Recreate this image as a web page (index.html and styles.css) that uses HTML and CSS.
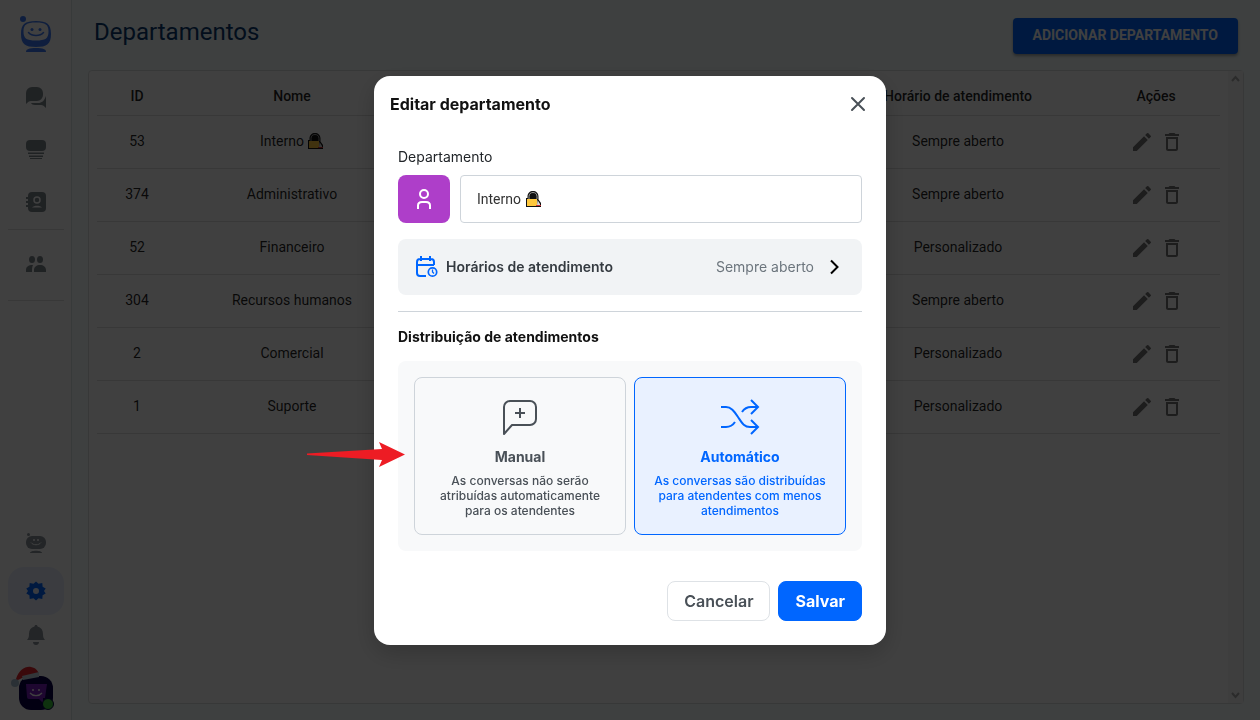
FILE: index.html
```html
<!DOCTYPE html>
<html lang="pt-BR">
<head>
<meta charset="utf-8">
<title>Departamentos</title>
<link rel="stylesheet" href="styles.css">
</head>
<body>
<svg width="0" height="0" class="sprite" aria-hidden="true">
  <symbol id="pencil" viewBox="0 0 24 24"><path d="M3 17.25V21h3.75L17.81 9.94l-3.75-3.75L3 17.25zM20.71 7.04a1 1 0 0 0 0-1.41l-2.34-2.34a1 1 0 0 0-1.41 0l-1.83 1.83 3.75 3.75 1.83-1.83z"/></symbol>
  <symbol id="trash" viewBox="0 0 24 24"><path d="M6 19c0 1.100.9 2 2 2h8c1.100 0 2-.9 2-2V7H6v12zM8 9h8v10H8V9zm7.500-5-1-1h-5l-1 1H5v2h14V4z"/></symbol>
  <symbol id="lock" viewBox="0 0 16 16">
    <path d="M0 16V7h1.500V5.500C1.500 2 4 0 7 0s5.500 2 5.500 5.500V8.500L15 12v4z" fill="#111"/>
    <path d="M3 8V5.500C3 3 4.600 1.500 7 1.500S11 3 11 5.500V8" fill="none" stroke="#9a9a9a" stroke-width="1"/>
    <rect x="1" y="8" width="10" height="7" fill="#ffc83d"/>
    <path d="M11.500 9l2.500 4v1h-3z" fill="#d8d8d8"/><path d="M10 14.500h5" stroke="#d13438"/>
  </symbol>
</svg>
<div class="app">
  <nav class="sidebar">
    <div class="side-group">
      <svg class="logo" width="36" height="40" viewBox="0 0 36 40"><g fill="#3d7af5"><circle cx="5" cy="3" r="3"/><path d="M18 5C7 5 3 8 3 18S7 31 18 31s15-3 15-13S29 5 18 5zM18 6.500c9.500 0 12.500 2 12.500 9S27.500 24.500 18 24.500 5.500 22.500 5.500 15.500 8.500 6.500 18 6.500z" fill-rule="evenodd"/><path d="M8 36c0-3 3-4 10-4s10 1 10 4z"/><circle cx="14" cy="13.500" r="1.500"/><circle cx="22" cy="13.500" r="1.500"/></g><path d="M10.500 16.500c3.500 4 11.500 4 15 0" fill="none" stroke="#3d7af5" stroke-width="1.500" stroke-linecap="round"/></svg>
      <a class="side-item" href="#" aria-label="Conversas"><svg width="20" height="22" viewBox="0 0 20 22"><path d="M0 17V6a6 6 0 0 1 6-6h5a6 6 0 0 1 6 6v2a6 6 0 0 1-6 6H5c-2 0-3 1-5 3z"/><path d="M20 9v12c-2-2-3-3-5-3H9c-2 0-3.500-.7-4-2h7c4 0 6-2 8-7z"/></svg></a>
      <a class="side-item" href="#" aria-label="Filas"><svg width="20" height="20" viewBox="0 0 20 20"><rect y="0" width="20" height="11" rx="4"/><path d="M2 12.500h16V14H2zM3 15.500h14V17H3zM4 18h12v1H4z"/></svg></a>
      <a class="side-item" href="#" aria-label="Contatos"><svg width="20" height="20" viewBox="0 0 20 20"><rect x="2" width="18" height="20" rx="4"/><path d="M0 5h3v2H0zM0 9h3v2H0zM0 13h3v2H0z"/><circle cx="11" cy="8" r="3" fill="none" stroke="#fff" stroke-width="1.500"/><path d="M6 15.500c2-2.500 8-2.500 10 0z" fill="#fff"/></svg></a>
      <hr class="side-line">
      <a class="side-item team" href="#" aria-label="Equipe"><svg width="20" height="16" viewBox="0 0 20 16"><ellipse cx="6" cy="3.500" rx="3" ry="3.500"/><ellipse cx="14" cy="3.500" rx="3" ry="3.500"/><path d="M0 16v-2c0-3 2-5 7-5-1 2-1 4-1 7zM8 16v-2c0-3 2.500-5 6-5s6 2 6 5v2z"/></svg></a>
      <hr class="side-line">
    </div>
    <div class="side-group">
      <a class="side-item bot" href="#" aria-label="Robô"><svg width="20" height="21" viewBox="0 0 20 21"><circle cx="2.500" cy="1.500" r="1.500"/><rect y="3" width="20" height="13" rx="6"/><path d="M4 20c0-3 12-3 12 0z"/><g fill="#fff"><circle cx="8" cy="7" r="1"/><circle cx="12" cy="7" r="1"/></g><path d="M5 9.500c2 3 8 3 10 0" fill="none" stroke="#fff"/></svg></a>
      <a class="side-item active" href="#" aria-label="Configurações"><svg width="20" height="20" viewBox="0 0 20 20"><path fill-rule="evenodd" d="M10 0.500l2.500 2.200 3.800-.8.300 3.900 3.100 1.700-1.700 2.500 1.700 2.500-3.100 1.700-.3 3.900-3.800-.8L10 19.500l-2.500-2.200-3.800.8-.3-3.900L.3 12.500 2 10 .3 7.500l3.100-1.700.3-3.900 3.800.8zM10 7a3 3 0 1 0 0 6 3 3 0 0 0 0-6z"/></svg></a>
      <a class="side-item bell" href="#" aria-label="Notificações"><svg width="18" height="20" viewBox="0 0 18 20"><path d="M9 0c1 0 1.500.6 1.500 1.600C14 2.500 16 5 16 9c0 3 .5 4 2 6H0c1.500-2 2-3 2-6 0-4 2-6.500 5.500-7.400C7.500.6 8 0 9 0zM6 17h6c0 1.700-1.300 3-3 3s-3-1.300-3-3z"/></svg></a>
      <svg class="avatar" width="44" height="44" viewBox="0 0 44 44"><rect x="9" y="10" width="34" height="34" rx="12" fill="#0a0048"/><path d="M16 18h21l-2 14h-2v5l-4-4H19q-2 0-2-2z" fill="#7a1fc0"/><circle cx="23" cy="24" r="1" fill="#fff"/><circle cx="29" cy="24" r="1" fill="#fff"/><path d="M20 27c3 3.500 9 3.500 12 0" fill="none" stroke="#fff" stroke-width="1.200"/><path d="M6 13C9 4 15 0 21 1c5 1 7 4 8 7l-17 4-6 3z" fill="#e8262c"/><path d="M12 10l17-4v5l-16 3z" fill="#c5d5e2"/><circle cx="5" cy="17" r="4" fill="#a9c0d2"/><circle cx="38" cy="38" r="5.500" fill="#3cc83c" stroke="#0a0048"/></svg>
    </div>
  </nav>
  <main class="main">
    <header class="page-head">
      <h1 class="page-title">Departamentos</h1>
      <button class="add-button" type="button">ADICIONAR DEPARTAMENTO</button>
    </header>
    <section class="card">
      <div class="table-wrap">
        <table class="table">
          <colgroup><col class="col-id"><col class="col-name"><col><col class="col-hours"><col class="col-actions"></colgroup>
          <thead><tr><th>ID</th><th>Nome</th><td></td><th>Horário de atendimento</th><th>Ações</th></tr></thead>
          <tbody id="rows"></tbody>
        </table>
      </div>
      <div class="scrollbar" aria-hidden="true">
        <svg width="9" height="8" viewBox="0 0 9 8"><path d="M1 6l3.500-4L8 6" fill="none" stroke="currentColor" stroke-width="2"/></svg>
        <svg width="9" height="8" viewBox="0 0 9 8"><path d="M1 2l3.500 4L8 2" fill="none" stroke="currentColor" stroke-width="2"/></svg>
      </div>
    </section>
  </main>
</div>
<div class="overlay">
  <form class="modal" role="dialog" aria-labelledby="modal-title">
    <header class="modal-head">
      <h2 class="modal-title" id="modal-title">Editar departamento</h2>
      <button class="close" type="button" aria-label="Fechar"><svg width="16" height="16" viewBox="0 0 16 16"><path d="M2 2l12 12m0-12L2 14" stroke="#495057" stroke-width="2" stroke-linecap="round"/></svg></button>
    </header>
    <div class="modal-body">
      <label class="label" for="department">Departamento</label>
      <div class="field-row">
        <button class="icon-button" type="button" aria-label="Ícone"><svg width="14" height="20" viewBox="0 0 14 20" fill="none" stroke="#fff" stroke-width="2"><circle cx="7" cy="5" r="4"/><path d="M1 20v-3.500C1 14 2.500 13 5 13h4c2.500 0 4 1 4 3.500V20"/></svg></button>
        <div class="input-wrap">
          <input class="input" id="department" type="text" value="Interno">
          <svg class="input-emoji" width="16" height="16"><use href="#lock"/></svg>
        </div>
      </div>
      <button class="hours" type="button">
        <svg width="22" height="22" viewBox="0 0 22 22" fill="none" stroke="#0066ff" stroke-width="2"><path d="M10 20H4a3 3 0 0 1-3-3V6a3 3 0 0 1 3-3h11a3 3 0 0 1 3 3v3M1 9h17M5 0v5M14 0v5"/><circle cx="16.500" cy="16" r="4.200" stroke-width="1.700"/><path d="M16.500 13.500V16l1.500 1.500" stroke-width="1.300"/></svg>
        <span class="hours-name">Horários de atendimento</span>
        <span class="hours-value">Sempre aberto</span>
        <svg width="24" height="16" viewBox="0 0 24 16" fill="none" stroke="#000" stroke-width="2"><path d="M9 1.500l6.500 6.500L9 14.500"/></svg>
      </button>
      <fieldset class="distribution">
        <legend class="section-title">Distribuição de atendimentos</legend>
        <div class="options">
          <label class="option">
            <input class="radio" type="radio" name="mode">
            <svg width="40" height="40" viewBox="0 0 40 40" fill="none" stroke="#495057" stroke-width="2"><path d="M4 36V9a6 6 0 0 1 6-6h20a6 6 0 0 1 6 6v12a6 6 0 0 1-6 6H12z" stroke-linejoin="round"/><path d="M20 10v10M15 15h10"/></svg>
            <strong class="option-name">Manual</strong>
            <span class="option-text">As conversas não serão atribuídas automaticamente para os atendentes</span>
          </label>
          <label class="option selected">
            <input class="radio" type="radio" name="mode" checked>
            <svg width="40" height="40" viewBox="0 0 40 40" fill="none" stroke="#0066ff" stroke-width="2"><path d="M1 9h5c5 0 8 4 12 10s6 10 12 10h8M1 29h5c4 0 7-2 9-5M22 14c2-3 4-5 9-5h7M31 2l7 7-7 7M31 22l7 7-7 7"/></svg>
            <strong class="option-name">Automático</strong>
            <span class="option-text">As conversas são distribuídas para atendentes com menos atendimentos</span>
          </label>
        </div>
      </fieldset>
    </div>
    <footer class="modal-foot">
      <button class="button cancel" type="button">Cancelar</button>
      <button class="button save" type="submit">Salvar</button>
    </footer>
    <svg class="pointer" width="98" height="26" viewBox="0 0 98 26" aria-hidden="true"><path d="M0 11.500L75 7 72 0l26 12.500L72 25l3-7L0 13z" fill="#ed1c24"/></svg>
  </form>
</div>
<script src="app.js"></script>
</body>
</html>
```
FILE: styles.css
```css
* { box-sizing: border-box; }
body { margin: 0; font-family: Roboto, "Liberation Sans", sans-serif; color: rgba(0, 0, 0, .87); }
button, input { font: inherit; margin: 0; }
button { cursor: pointer; }
h1, h2 { margin: 0; }
.sprite { display: none; }

.app { display: flex; height: 100vh; background: #f5ffff; }
.sidebar { display: flex; flex-direction: column; justify-content: space-between; width: 72px; background: #fff; border-right: 1px solid #dce5e7; padding: 16px 8px 10px; }
.side-group { display: flex; flex-direction: column; align-items: center; }
.side-item { display: flex; align-items: center; justify-content: center; width: 56px; height: 52px; border-radius: 16px; }
.side-item svg { fill: #8a939b; }
.side-group:first-child .side-item svg { fill: #7e868d; }
.logo { margin-bottom: 16px; }
.side-line { width: 56px; height: 1px; margin: 1px 0 8px; border: 0; background: #dedede; }
.side-item.bot, .side-item.active { height: 48px; }
.side-item.team { margin-bottom: 9px; }
.side-item.active { background: #e9f0ff; }
.side-item.active svg { fill: #0066ff; }
.side-item.bell { height: 40px; margin-bottom: 11px; }
.avatar { align-self: flex-start; margin-left: 2px; }

.main { flex: 1; min-width: 0; display: flex; flex-direction: column; padding: 16px; }
.page-head { display: flex; justify-content: space-between; align-items: flex-start; height: 54px; padding: 2px 6px 0; }
.page-title { font-size: 24px; line-height: 28px; font-weight: 400; color: #0b3a70; }
.add-button { height: 36px; padding: 0 20px 2px; border: 0; border-radius: 4px; background: #0066ff; color: #fff; font-size: 14px; font-weight: 700; box-shadow: 0 2px 3px rgba(0, 0, 0, .35); }
.card { flex: 1; display: flex; background: #fff; border: 1px solid #dce0e0; border-radius: 4px; }
.table-wrap { flex: 1; padding: 8px; }
.table { width: 100%; table-layout: fixed; border-collapse: collapse; font-size: 14px; text-align: center; }
.col-id { width: 80px; }
.col-name { width: 230px; }
.col-hours { width: 268px; }
.col-actions { width: 128px; }
.table th, .table td { padding: 0 0 2px; border-bottom: 1px solid #dedede; }
.table th { height: 36px; font-weight: 500; }
.table tbody td { height: 53px; }
.table tbody td:last-child { padding: 0 0 0 2px; }
.name { display: flex; align-items: center; justify-content: center; gap: 4px; }
.actions { display: flex; justify-content: center; gap: 6px; }
.action { display: flex; padding: 0; border: 0; background: none; }
.action svg { fill: #757575; }
.scrollbar { width: 15px; display: flex; flex-direction: column; align-items: center; justify-content: space-between; padding: 4px 0; background: #f8f8f8; color: #aaa; }

.overlay { position: fixed; inset: 0; display: flex; align-items: center; justify-content: center; background: rgba(0, 0, 0, .75); font-family: Inter, "Liberation Sans", sans-serif; }
.modal { position: relative; width: 512px; max-width: 100%; background: #fff; border-radius: 16px; box-shadow: 0 8px 24px rgba(0, 0, 0, .2); }
.modal-head { display: flex; justify-content: space-between; align-items: center; height: 56px; padding: 0 16px; }
.modal-title { font-size: 16px; line-height: 24px; font-weight: 700; color: #111; }
.close { display: flex; padding: 4px; border: 0; background: none; }
.modal-body { padding: 13px 24px 0; }
.label { display: block; margin-bottom: 6px; font-size: 14px; line-height: 24px; color: #212529; }
.field-row { display: flex; gap: 10px; }
.icon-button { display: flex; align-items: center; justify-content: center; width: 52px; height: 48px; border: 0; border-radius: 8px; background: #ae3ec9; }
.input-wrap { position: relative; flex: 1; }
.input { width: 100%; height: 48px; padding: 0 16px; border: 1px solid #ced4da; border-radius: 4px; background: #fff; color: #333; font-family: Roboto, sans-serif; font-size: 14px; }
.input-emoji { position: absolute; left: 66px; top: 16px; }
.hours { display: flex; align-items: center; width: 100%; height: 56px; margin-top: 16px; padding: 0 16px 0 18px; border: 0; border-radius: 8px; background: #f1f3f5; font-size: 14px; text-align: left; }
.hours-name { flex: 1; margin-left: 8px; font-weight: 600; color: #343a40; }
.hours-value { margin-right: 8px; color: #6c757d; }
.distribution { margin: 16px 0 0; padding: 13px 0 0; border: 0; border-top: 1px solid #ced4da; min-width: 0; }
.section-title { float: left; width: 100%; padding: 0; margin-bottom: 12px; font-size: 14px; line-height: 24px; font-weight: 700; color: #111; }
.options { clear: both; display: grid; grid-template-columns: 1fr 1fr; gap: 8px; padding: 16px; border-radius: 8px; background: #f8f9fa; }
.option { position: relative; display: flex; flex-direction: column; align-items: center; min-height: 158px; padding: 20px 16px 0; border: 1px solid #ced4da; border-radius: 8px; color: #495057; text-align: center; cursor: pointer; }
.option.selected { border-color: #0066ff; background: #e9f1ff; color: #0066ff; }
.radio { position: absolute; opacity: 0; }
.option-name { margin-top: 7px; font-size: 14px; line-height: 24px; font-weight: 700; }
.option-text { margin-top: 4px; font-size: 12px; line-height: 15px; font-weight: 500; }
.modal-foot { display: flex; justify-content: flex-end; gap: 8px; padding: 30px 24px 24px; }
.button { height: 40px; padding: 0 16px; border-radius: 8px; font-size: 16px; font-weight: 600; }
.cancel { border: 1px solid #dee2e6; background: #fff; color: #495057; }
.save { border: 1px solid #0066ff; background: #0066ff; color: #fff; font-weight: 700; }
.pointer { position: absolute; left: -67px; top: 366px; }
```
FILE: app.js
```javascript
const rows = [
  [53, "Interno", "Sempre aberto", true],
  [374, "Administrativo", "Sempre aberto"],
  [52, "Financeiro", "Personalizado"],
  [304, "Recursos humanos", "Sempre aberto"],
  [2, "Comercial", "Personalizado"],
  [1, "Suporte", "Personalizado"]
];
const icon = (id, size) => `<svg width="${size}" height="${size}"><use href="#${id}"/></svg>`;
document.getElementById("rows").innerHTML = rows.map(([id, name, hours, locked]) => `<tr>
  <td>${id}</td>
  <td><div class="name">${name}${locked ? icon("lock", 16) : ""}</div></td>
  <td></td>
  <td>${hours}</td>
  <td><div class="actions">
    <button class="action" type="button" aria-label="Editar ${name}">${icon("pencil", 24)}</button>
    <button class="action" type="button" aria-label="Excluir ${name}">${icon("trash", 24)}</button>
  </div></td>
</tr>`).join("");
```
